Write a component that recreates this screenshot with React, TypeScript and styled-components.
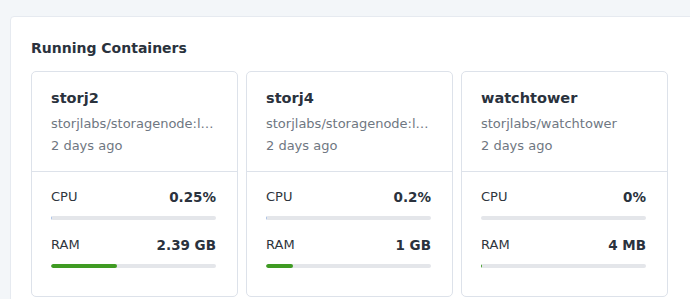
import React from 'react';
import styled, { createGlobalStyle } from 'styled-components';

const GlobalStyle = createGlobalStyle`
  html, body {
    margin: 0;
    padding: 0;
    background: #f3f6f9;
    font-family: "DejaVu Sans", Verdana, sans-serif;
    overflow: hidden;
  }
`;

const Page = styled.div`
  padding: 16px 0 0 10px;
  height: 299px;
  box-sizing: border-box;
  overflow: hidden;
`;

const Panel = styled.section`
  width: 720px;
  min-height: 300px;
  background: #fff;
  border: 1px solid #e6eaf0;
  border-radius: 4px;
  box-sizing: border-box;
  padding: 21px 20px 0 20px;
`;

const PanelTitle = styled.h2`
  margin: 0 0 13px 0;
  font-size: 14px;
  font-weight: 700;
  color: #2a323d;
  line-height: 20px;
`;

const Grid = styled.div`
  display: grid;
  grid-template-columns: repeat(3, 207px);
  gap: 8px;
`;

const Card = styled.div`
  border: 1px solid #dde2ea;
  border-radius: 5px;
  box-sizing: border-box;
  height: 226px;
  display: flex;
  flex-direction: column;
`;

const CardHead = styled.div`
  padding: 16px 21px 14px 19px;
  border-bottom: 1px solid #dde2ea;
`;

const Name = styled.div`
  font-size: 14.5px;
  font-weight: 700;
  color: #2a323d;
  line-height: 20px;
  margin-bottom: 5px;
`;

const Meta = styled.div`
  font-size: 13px;
  color: #6f7782;
  line-height: 22px;
  white-space: nowrap;
  overflow: hidden;
  text-overflow: ellipsis;
`;

const Stats = styled.div`
  padding: 15px 21px 0 19px;
`;

const Stat = styled.div`
  margin-bottom: 15px;
`;

const StatRow = styled.div`
  display: flex;
  justify-content: space-between;
  align-items: center;
  font-size: 13px;
  line-height: 20px;
  color: #2f353d;
  margin-bottom: 9px;
`;

const StatValue = styled.span`
  font-weight: 700;
  font-size: 13.5px;
  color: #2a323d;
`;

const Track = styled.div`
  height: 4px;
  border-radius: 2px;
  background: #e4e6ea;
  overflow: hidden;
`;

const Fill = styled.div<{ $color: string }>`
  height: 100%;
  border-radius: 2px;
  background: ${(p) => p.$color};
`;

type Container = {
  name: string;
  image: string;
  age: string;
  cpu: string;
  cpuPct: number;
  ram: string;
  ramPct: number;
};

const containers: Container[] = [
  { name: 'storj2', image: 'storjlabs/storagenode:latest', age: '2 days ago', cpu: '0.25%', cpuPct: 0.8, ram: '2.39 GB', ramPct: 40 },
  { name: 'storj4', image: 'storjlabs/storagenode:latest', age: '2 days ago', cpu: '0.2%', cpuPct: 0.7, ram: '1 GB', ramPct: 16.5 },
  { name: 'watchtower', image: 'storjlabs/watchtower', age: '2 days ago', cpu: '0%', cpuPct: 0, ram: '4 MB', ramPct: 0.8 },
];

function App() {
  return (
    <Page>
      <GlobalStyle />
      <Panel>
        <PanelTitle>Running Containers</PanelTitle>
        <Grid>
          {containers.map((c) => (
            <Card key={c.name}>
              <CardHead>
                <Name>{c.name}</Name>
                <Meta>{c.image}</Meta>
                <Meta>{c.age}</Meta>
              </CardHead>
              <Stats>
                <Stat>
                  <StatRow>
                    <span>CPU</span>
                    <StatValue>{c.cpu}</StatValue>
                  </StatRow>
                  <Track>
                    <Fill $color="#a9c1e6" style={{ width: `${c.cpuPct}%` }} />
                  </Track>
                </Stat>
                <Stat>
                  <StatRow>
                    <span>RAM</span>
                    <StatValue>{c.ram}</StatValue>
                  </StatRow>
                  <Track>
                    <Fill $color="#3f9b23" style={{ width: `${c.ramPct}%` }} />
                  </Track>
                </Stat>
              </Stats>
            </Card>
          ))}
        </Grid>
      </Panel>
    </Page>
  );
}

export default App;
